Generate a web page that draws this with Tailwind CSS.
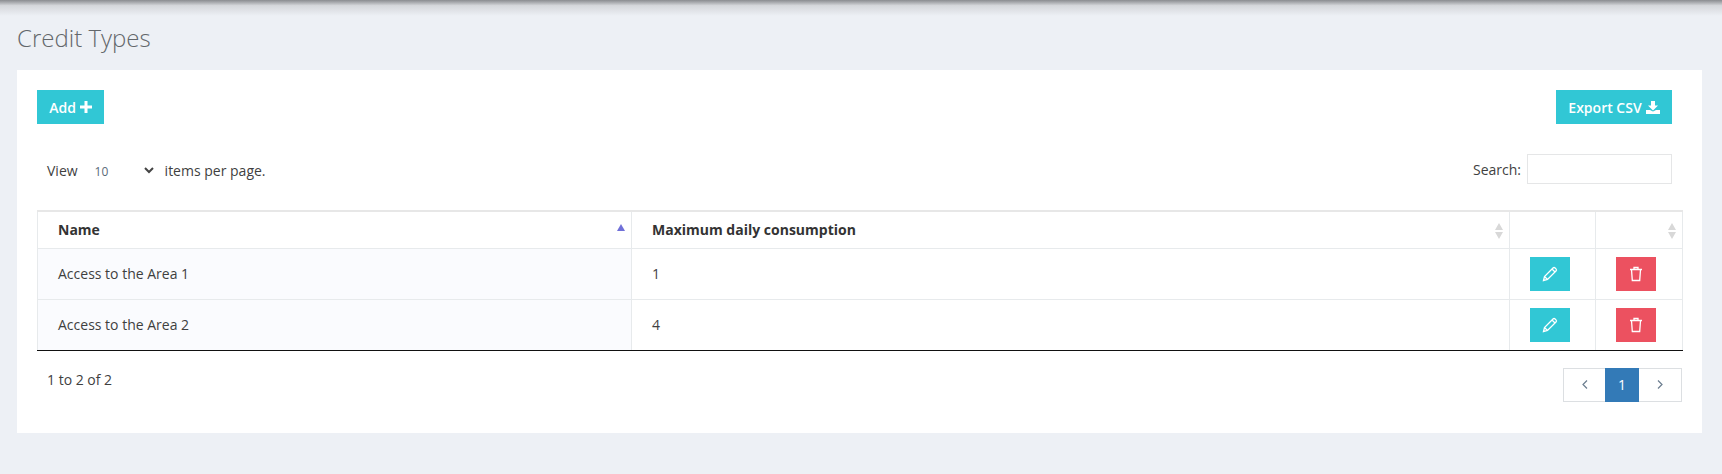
<!DOCTYPE html>
<html lang="en">
<head>
  <meta charset="UTF-8" />
  <meta name="viewport" content="width=device-width, initial-scale=1.0"/>
  <title>Credit Types</title>
  <script src="https://cdn.jsdelivr.net/npm/@tailwindcss/browser@4"></script>
</head>
<body class="bg-[#edf0f5] h-[474px] overflow-hidden font-['Open_Sans',sans-serif] text-[14px] text-[#3f3f3f]">

  <div class="h-4 bg-gradient-to-b from-[#8a8c90] via-[#d5d7db] via-35% to-[#edf0f5]"></div>

  <h1 class="pl-[17px] pt-[5px] h-[54px] text-[24px] leading-[33px] font-light text-[#63676b]">Credit Types</h1>

  <div class="mx-[17px] w-[1685px] h-[363px] bg-white pl-5 pr-[20px] pt-5">
    <div class="flex justify-between w-[1635px]">
      <button class="h-[34px] w-[67px] bg-[#31c7d5] text-white font-semibold flex items-center justify-center gap-1">
        Add
        <svg class="w-3 h-3" viewBox="0 0 12 12" fill="currentColor"><path d="M4.500 0h3v4.500H12v3H7.500V12h-3V7.500H0v-3h4.500z"/></svg>
      </button>
      <button class="h-[34px] w-[116px] bg-[#31c7d5] text-white font-semibold flex items-center justify-center gap-1">
        Export CSV
        <svg class="w-[14px] h-[13px]" viewBox="0 0 14 13" fill="currentColor"><path d="M5 0h4v4.500h3L7 9.500 2 4.500h3z"/><path d="M0 9h4l3 1.500L10 9h4v4H0z"/></svg>
      </button>
    </div>

    <div class="flex justify-between items-center mt-[30px] h-[30px] pl-[10px] w-[1635px]">
      <div class="flex items-center pt-[3px]">
        <span>View</span>
        <span class="ml-[17px] w-[49px] text-[12px] text-[#5b6a78] pt-[3px]">10</span>
        <svg class="w-[10px] h-[7px] text-[#444]" viewBox="0 0 10 7" fill="none" stroke="currentColor" stroke-width="2"><path d="M1 1l4 4 4-4"/></svg>
        <span class="ml-[11px]">items per page.</span>
      </div>
      <label class="flex items-center gap-[6px]">
        Search:
        <input class="w-[145px] h-[30px] border border-[#e5e6e7] bg-white" />
      </label>
    </div>

    <table class="table-fixed border-collapse mt-[26px] w-[1645px] border-t-2 border-[#e7e7e7]">
      <colgroup>
        <col class="w-[594px]" />
        <col class="w-[878px]" />
        <col class="w-[86px]" />
        <col class="w-[87px]" />
      </colgroup>
      <thead>
        <tr class="h-[37px] text-left">
          <th class="relative border border-t-0 border-[#e7eaec] pl-5 font-bold text-[#333]">
            Name
            <svg class="absolute right-[6px] top-[12px] w-2 h-[7px] text-[#7070d8]" viewBox="0 0 8 7" fill="currentColor"><path d="M4 0l4 7H0z"/></svg>
          </th>
          <th class="relative border border-t-0 border-[#e7eaec] pl-5 font-bold text-[#333]">
            Maximum daily consumption
            <svg class="absolute right-[6px] top-[11px] w-2 h-[16px] text-[#d8d8d8]" viewBox="0 0 8 16" fill="currentColor"><path d="M4 0l4 7H0zM4 16l4-7H0z"/></svg>
          </th>
          <th class="border border-t-0 border-[#e7eaec]"></th>
          <th class="relative border border-t-0 border-[#e7eaec]">
            <svg class="absolute right-[6px] top-[11px] w-2 h-[16px] text-[#d8d8d8]" viewBox="0 0 8 16" fill="currentColor"><path d="M4 0l4 7H0zM4 16l4-7H0z"/></svg>
          </th>
        </tr>
      </thead>
      <tbody>
        <tr class="h-[51px]">
          <td class="border border-[#e7eaec] bg-[#fafbfe] pl-5">Access to the Area 1</td>
          <td class="border border-[#e7eaec] pl-5">1</td>
          <td class="border border-[#e7eaec] text-center pr-[6px]">
            <button class="inline-flex items-center justify-center align-middle w-10 h-[34px] bg-[#31c7d5] text-white">
              <svg class="w-4 h-4" viewBox="0 0 16 16" fill="none" stroke="currentColor" stroke-width="1.300"><path d="M1.500 14.500l1-4L11 2a1.500 1.500 0 0 1 2.100 0l.9.900a1.500 1.500 0 0 1 0 2.100l-8.500 8.500zM2.500 10.500l3 3M10 3l3 3"/></svg>
            </button>
          </td>
          <td class="border border-[#e7eaec] text-center pr-[7px]">
            <button class="inline-flex items-center justify-center align-middle w-10 h-[34px] bg-[#ec5160] text-white">
              <svg class="w-[14px] h-4" viewBox="0 0 14 16" fill="none" stroke="currentColor" stroke-width="1.300"><path d="M1 3.500h12M5 3.500V1.500h4v2M2.500 3.500l.8 11h7.400l.8-11"/></svg>
            </button>
          </td>
        </tr>
        <tr class="h-[51px]">
          <td class="border-x border-[#e7eaec] border-b border-b-[#111] bg-[#fafbfe] pl-5">Access to the Area 2</td>
          <td class="border-x border-[#e7eaec] border-b border-b-[#111] pl-5">4</td>
          <td class="border-x border-[#e7eaec] border-b border-b-[#111] text-center pr-[6px]">
            <button class="inline-flex items-center justify-center align-middle w-10 h-[34px] bg-[#31c7d5] text-white">
              <svg class="w-4 h-4" viewBox="0 0 16 16" fill="none" stroke="currentColor" stroke-width="1.300"><path d="M1.500 14.500l1-4L11 2a1.500 1.500 0 0 1 2.100 0l.9.900a1.500 1.500 0 0 1 0 2.100l-8.500 8.500zM2.500 10.500l3 3M10 3l3 3"/></svg>
            </button>
          </td>
          <td class="border-x border-[#e7eaec] border-b border-b-[#111] text-center pr-[7px]">
            <button class="inline-flex items-center justify-center align-middle w-10 h-[34px] bg-[#ec5160] text-white">
              <svg class="w-[14px] h-4" viewBox="0 0 14 16" fill="none" stroke="currentColor" stroke-width="1.300"><path d="M1 3.500h12M5 3.500V1.500h4v2M2.500 3.500l.8 11h7.400l.8-11"/></svg>
            </button>
          </td>
        </tr>
      </tbody>
    </table>

    <div class="flex justify-between w-[1645px] mt-[17px] pl-[10px]">
      <span class="mt-[1px]">1 to 2 of 2</span>
      <div class="flex h-[34px] border border-[#dcdfe2] text-[#6b7d8f]">
        <span class="w-[41px] flex items-center justify-center">
          <svg class="w-[6px] h-[9px]" viewBox="0 0 6 9" fill="none" stroke="currentColor" stroke-width="1.200"><path d="M5 .500l-4 4 4 4"/></svg>
        </span>
        <span class="w-[34px] -my-px flex items-center justify-center bg-[#337ab7] text-white">1</span>
        <span class="w-[42px] flex items-center justify-center">
          <svg class="w-[6px] h-[9px]" viewBox="0 0 6 9" fill="none" stroke="currentColor" stroke-width="1.200"><path d="M1 .500l4 4-4 4"/></svg>
        </span>
      </div>
    </div>
  </div>

</body>
</html>
